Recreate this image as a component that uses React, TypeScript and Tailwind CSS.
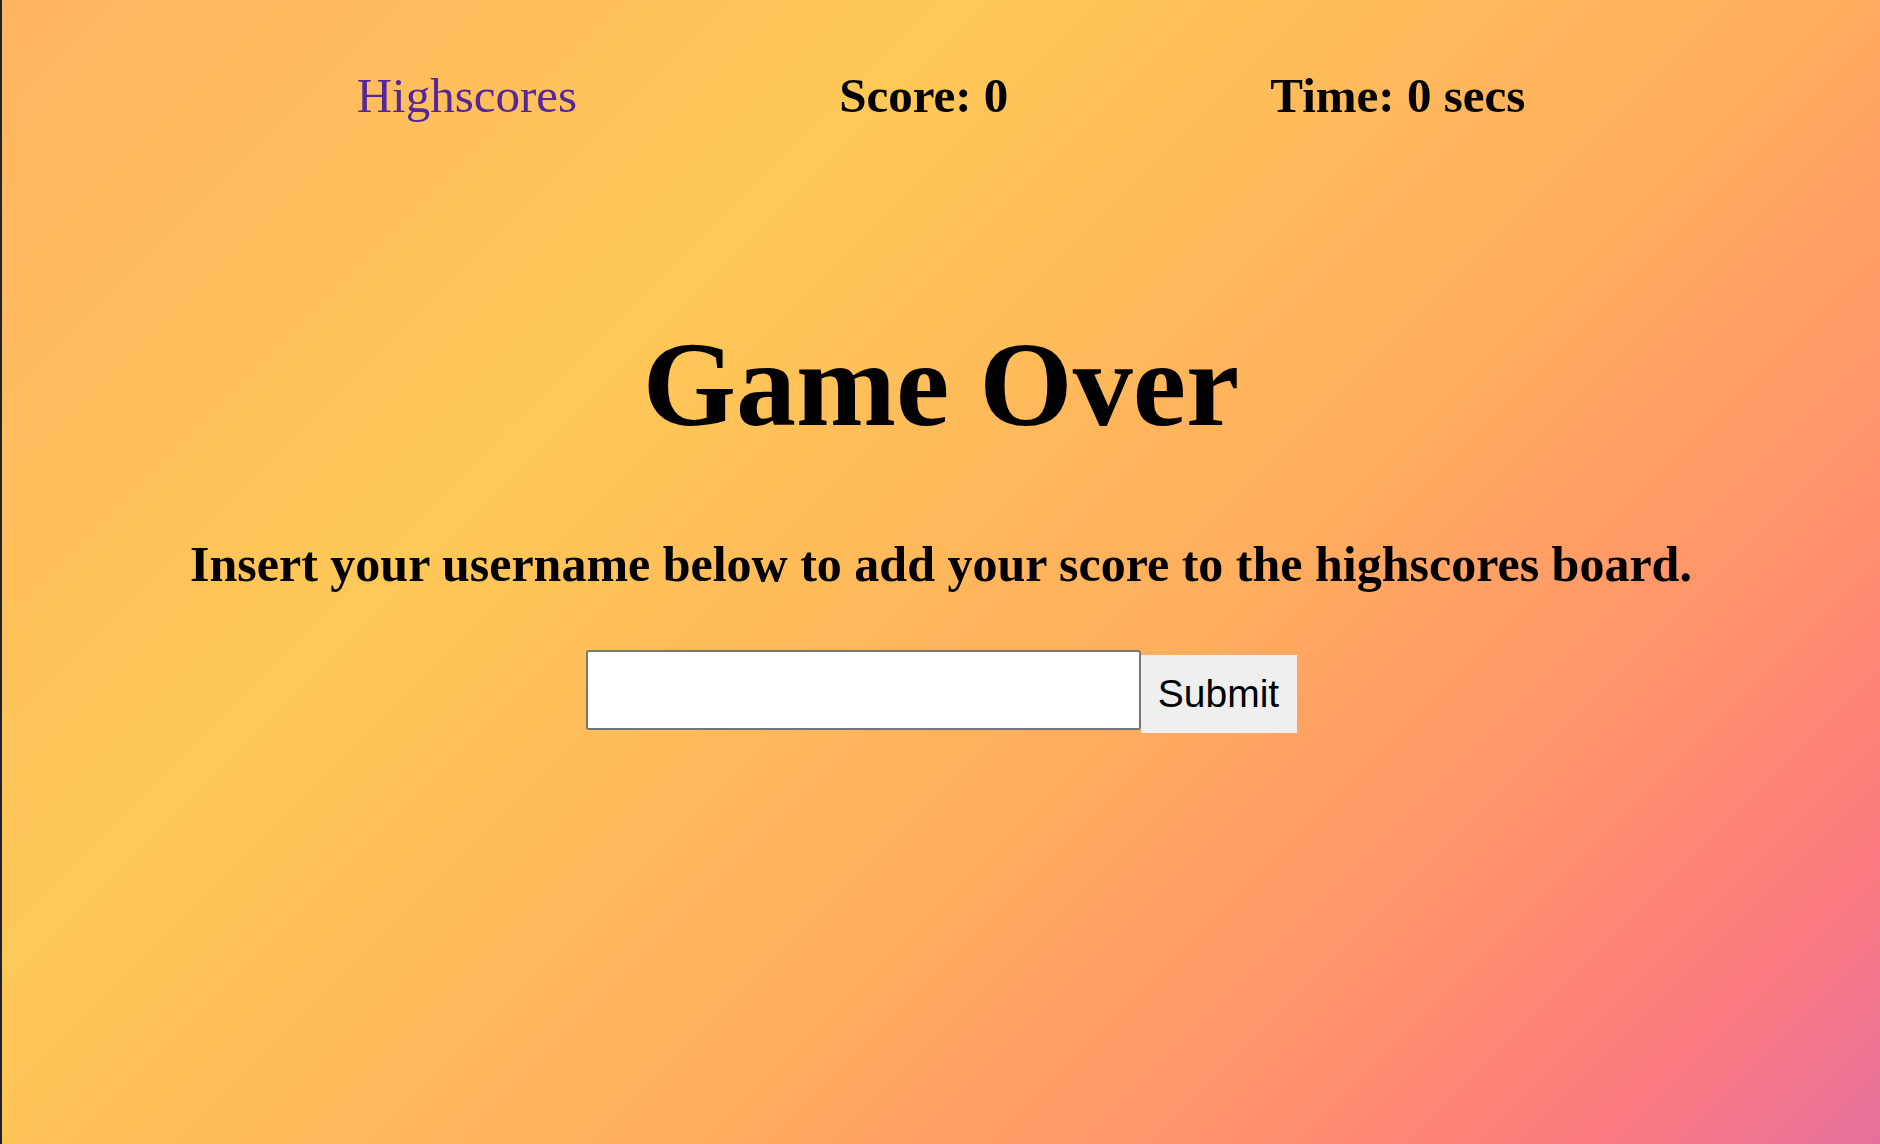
export default function App() {
  return (
    <div
      className="h-[1144px] w-full border-l-2 border-[#202326] bg-[linear-gradient(135deg,#ffb462_0%,#ffc857_32%,#ffae5d_60%,#ff916c_78%,#fb7b7e_90%,#e6709c_100%)] font-['Liberation_Serif',serif] text-black"
    >
      {/* top bar */}
      <nav className="flex justify-center gap-[262px] pt-[71px] text-[49px] leading-none">
        <a href="#" className="text-[#55279b]">
          Highscores
        </a>
        <span className="font-bold">Score: 0</span>
        <span className="font-bold">Time: 0 secs</span>
      </nav>

      <main className="flex flex-col items-center">
        <h1 className="mt-[205px] text-[120px] font-bold leading-none">Game Over</h1>
        <p className="mt-[94px] text-[50px] font-bold leading-none">
          Insert your username below to add your score to the highscores board.
        </p>

        <form className="mt-[61px] flex items-start" onSubmit={(e) => e.preventDefault()}>
          <input
            type="text"
            className="h-[80px] w-[555px] rounded-[3px] border-2 border-[#767676] bg-white px-2 text-[39px] outline-none"
          />
          <button
            type="submit"
            className="mt-[5px] h-[78px] w-[156px] bg-[#efefef] font-['Liberation_Sans',Arial,sans-serif] text-[39px] text-black"
          >
            Submit
          </button>
        </form>
      </main>
    </div>
  );
}
